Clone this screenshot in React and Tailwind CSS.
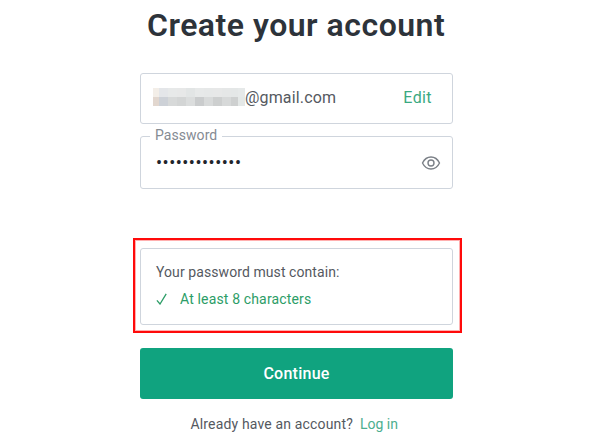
const TOP_ROW = ['bg-[#f3eee8]', 'bg-[#e4e6e9]', 'bg-[#e7e9e9]', 'bg-[#e7e8e8]', 'bg-[#e2e5e5]', 'bg-[#e7e9e9]', 'bg-[#e6e8e8]', 'bg-[#e7e8e8]', 'bg-[#e5e7e7]', 'bg-[#e4e7e7]', 'bg-[#e6e9e9]'];
const BOTTOM_ROW = ['bg-[#e2d7cf]', 'bg-[#cdd1d7]', 'bg-[#d7d9d9]', 'bg-[#d3d5d5]', 'bg-[#dbdddd]', 'bg-[#cacccd]', 'bg-[#d8dada]', 'bg-[#cdcfcf]', 'bg-[#d7d9d9]', 'bg-[#ced0d0]', 'bg-[#e4e8e7]'];

const MaskedName = () => (
  <div className="w-[92px] h-[18px] mb-[3px] shrink-0 grid grid-cols-[6px_repeat(8,9px)_7px_7px] grid-rows-2">
    {[...TOP_ROW, ...BOTTOM_ROW].map((color, i) => (
      <span key={i} className={color} />
    ))}
  </div>
);

const EyeIcon = () => (
  <svg className="w-[20px] h-[16px]" viewBox="0 0 20 16" fill="none" stroke="#7b8087" strokeWidth="1.4">
    <path d="M1.5 8C3.4 4.1 6.3 2 10 2s6.6 2.1 8.5 6c-1.9 3.9-4.8 6-8.5 6S3.4 11.9 1.5 8z" strokeLinejoin="round" />
    <circle cx="10" cy="8" r="3" />
  </svg>
);

const CheckIcon = () => (
  <svg className="w-[11px] h-[12px]" viewBox="0 0 11 12" fill="none" stroke="#2c9d67" strokeWidth="1.3">
    <path d="M.9 7.3 4 11 10.2.8" />
  </svg>
);

export default function App() {
  return (
    <main className="w-[600px] h-[436px] overflow-hidden bg-white font-[Roboto,sans-serif] text-[#55595f]">
      <h1 className="pt-[5px] pl-[147px] text-[32px] leading-[40px] font-semibold tracking-[0.5px] whitespace-nowrap text-[#2d333a]">
        Create your account
      </h1>

      <div className="w-[313px] ml-[140px] mt-[28px]">
        <div className="h-[51px] pl-[12px] pr-[20px] flex items-center border border-[#cfd5dd] rounded-[3px]">
          <MaskedName />
          <span className="flex-1 pb-[2px] text-[16px] leading-[20px] tracking-[0.15px]">@gmail.com</span>
          <a className="pb-[2px] text-[16px] leading-[20px] tracking-[0.4px] text-[#3aa981]">Edit</a>
        </div>

        <fieldset className="h-[62px] mt-[3px] pl-[15px] pr-[11px] border border-[#cfd5dd] rounded-[3px]">
          <legend className="-ml-[6px] px-[5px] pb-[2px] text-[14px] leading-[16px] tracking-[0.05px] text-[#858b93]">Password</legend>
          <div className="h-[35px] flex items-center justify-between">
            <span className="text-[18px] leading-[20px] tracking-[0.5px] text-[#1f252c]">•••••••••••••</span>
            <EyeIcon />
          </div>
        </fieldset>

        <section className="w-[329px] h-[95px] -ml-[7px] mt-[49px] px-[5px] pt-[8px] border-2 border-[#ff0a0a] shadow-[inset_0_0_0_1px_#ffb0b0]">
          <div className="w-[313px] h-[77px] pt-[13px] pl-[15px] border border-[#cfd5dd] rounded-[3px] text-[14px] leading-[20px]">
            <p className="tracking-[0.08px]">Your password must contain:</p>
            <div className="mt-[7px] flex items-center gap-[13px] text-[#2c9d67]">
              <CheckIcon />
              <span className="tracking-[0.15px]">At least 8 characters</span>
            </div>
          </div>
        </section>

        <button className="block w-full h-[51px] mt-[15px] rounded-[3px] bg-[#10a37f] text-[16px] leading-[20px] font-medium tracking-[0.25px] text-white">
          Continue
        </button>

        <p className="mt-[15px] flex justify-end pr-[55px] gap-[7px] text-[14px] leading-[20px] whitespace-nowrap">
          <span className="tracking-[0.16px]">Already have an account?</span>
          <a className="text-[#4cae8f]">Log in</a>
        </p>
      </div>
    </main>
  );
}
